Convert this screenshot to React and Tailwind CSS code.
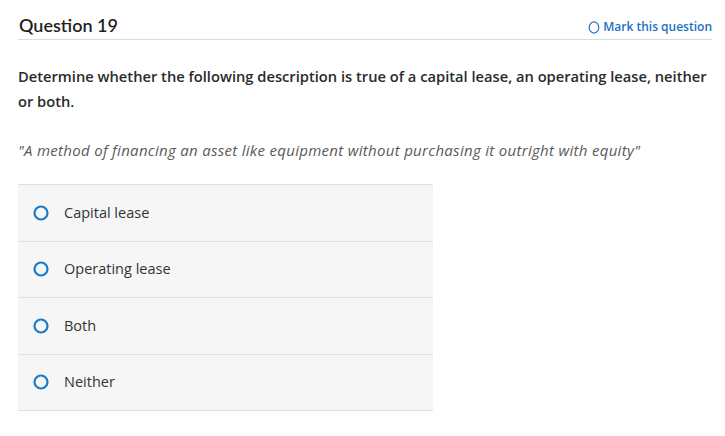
const options = ['Capital lease', 'Operating lease', 'Both', 'Neither']

function Ring({ className }) {
  return (
    <svg viewBox="0 0 16 16" className={className} fill="none">
      <circle cx="8" cy="8" r="6.5" stroke="currentColor" strokeWidth="2.2" />
    </svg>
  )
}

export default function App() {
  return (
    <div className="min-h-[436px] bg-white pl-[18px] pr-[13px] pt-[14px] font-['Open_Sans',sans-serif]">
      <div className="flex items-center justify-between border-b border-[#dcdcdc] pb-[3px] pl-px">
        <h1 className="font-['Lato',sans-serif] text-[18px] font-semibold leading-[21px] text-[#1f1f1f]">Question 19</h1>
        <button className="mt-[4px] flex items-center gap-[3px] text-[12px] font-semibold text-[#1a72c2]">
          <svg viewBox="0 0 12 14" className="h-[13px] w-[12px]" fill="none">
            <ellipse cx="6" cy="7" rx="5.2" ry="6" stroke="currentColor" strokeWidth="1.2" />
          </svg>
          Mark this question
        </button>
      </div>

      <p className="mt-[24px] text-[14.7px] font-semibold leading-[25px] text-[#2b2b2b]">
        Determine whether the following description is true of a capital lease, an operating lease, neither
        or both.
      </p>

      <p className="mt-[26px] text-[15px] italic leading-[20px] tracking-[0.3px] text-[#5a5a5a]">
        "A method of financing an asset like equipment without purchasing it outright with equity"
      </p>

      <ul className="mt-[24px] w-[415px] border-t border-[#e0e0e0]">
        {options.map((o) => (
          <li
            key={o}
            className="flex h-[56.5px] items-center gap-[15px] border-b border-[#e0e0e0] bg-[#f6f6f6] pl-[15px] text-[14.5px] text-[#333333]"
          >
            <Ring className="h-[16px] w-[16px] text-[#1a7ac6]" />
            {o}
          </li>
        ))}
      </ul>
    </div>
  )
}
